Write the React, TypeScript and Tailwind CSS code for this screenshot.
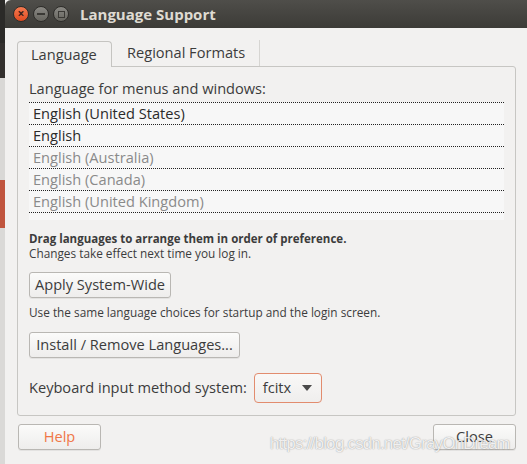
import React from "react";

const font = { fontFamily: '"Open Sans", "Noto Sans", sans-serif' };

function Btn({ children, className = "" }: { children: React.ReactNode; className?: string }) {
  return (
    <div
      className={
        "h-[26px] flex items-center justify-center rounded-[3px] border border-[#b9b7b3] bg-gradient-to-b from-[#fbfbfa] to-[#eeedec] shadow-[0_1px_0_rgba(0,0,0,0.06)] text-[14.6px] " +
        className
      }
    >
      {children}
    </div>
  );
}

export default function App() {
  const langs = [
    { t: "English (United States)", dark: true },
    { t: "English", dark: true },
    { t: "English (Australia)", dark: false },
    { t: "English (Canada)", dark: false },
    { t: "English (United Kingdom)", dark: false },
  ];
  return (
    <div className="w-[527px] h-[464px] flex overflow-hidden bg-[#f2f1f0]" style={font}>
      {/* desktop strip */}
      <div className="w-[5px] flex flex-col">
        <div className="h-[43px] bg-[#2b2a28]" />
        <div className="h-[35px] bg-[#33302e]" />
        <div className="h-[102px] bg-[#d9d8d6]" />
        <div className="h-[48px] bg-[#c0553e]" />
        <div className="flex-1 bg-[#dad9d7]" />
      </div>
      {/* window */}
      <div className="flex-1 flex flex-col bg-[#f2f1f0] text-[#3c3c3c]">
        <div className="h-[28px] flex items-center bg-gradient-to-b from-[#4f4e4a] to-[#3c3b37] rounded-tl-[6px]">
          <div className="ml-[8px] w-[16px] h-[16px] rounded-full bg-gradient-to-b from-[#f47a50] to-[#df4a1f] border border-[#2e2d2a] flex items-center justify-center text-[#3b2019] text-[12px] leading-none font-bold">
            ×
          </div>
          <div className="ml-[4px] w-[16px] h-[16px] rounded-full bg-gradient-to-b from-[#8a8984] to-[#66655f] border border-[#2e2d2a] flex items-center justify-center">
            <div className="w-[8px] h-[2px] bg-[#3a3935]" />
          </div>
          <div className="ml-[4px] w-[16px] h-[16px] rounded-full bg-gradient-to-b from-[#8a8984] to-[#66655f] border border-[#2e2d2a] flex items-center justify-center">
            <div className="w-[7px] h-[7px] border-[1.5px] border-[#3a3935]" />
          </div>
          <div className="ml-[11px] text-[#dfdbd2] font-bold text-[15px]">Language Support</div>
        </div>
        <div className="flex-1 flex flex-col pl-[12px] pr-[11px] pt-[12px]">
          {/* tabs */}
          <div className="flex items-end h-[26px]">
            <div className="w-[95px] h-[26px] border border-b-0 border-[#c5c4c1] rounded-t-[4px] bg-[#f2f1f0] pl-[13px] flex items-center text-[14.6px] relative top-[1px] z-10">
              Language
            </div>
            <div className="h-[26px] pl-[15px] pr-[14px] flex items-center text-[14.6px] border-r border-[#d6d5d2]">
              Regional Formats
            </div>
          </div>
          <div className="h-[350px] border border-[#c7c6c3] rounded-[3px] rounded-tl-none px-[11px] pt-[11px] flex flex-col">
            <div className="text-[14.6px] leading-[20px]">Language for menus and windows:</div>
            <div className="mt-[4px] h-[118px] bg-[#f7f7f7] flex flex-col">
              {langs.map((l) => (
                <div
                  key={l.t}
                  className={
                    "h-[22px] border-t border-dotted border-[#222] pl-[4px] flex items-center text-[14.6px] " +
                    (l.dark ? "text-[#2a2a2a]" : "text-[#8a8a8a]")
                  }
                >
                  {l.t}
                </div>
              ))}
              <div className="border-t border-dotted border-[#222]" />
            </div>
            <div className="mt-[12px] text-[11.5px] leading-[14px] font-bold">
              Drag languages to arrange them in order of preference.
            </div>
            <div className="text-[11.8px] leading-[14px]">Changes take effect next time you log in.</div>
            <Btn className="mt-[12px] w-[142px]">Apply System-Wide</Btn>
            <div className="mt-[7px] text-[11.8px] leading-[14px]">
              Use the same language choices for startup and the login screen.
            </div>
            <Btn className="mt-[13px] w-[211px]">Install / Remove Languages...</Btn>
            <div className="mt-[15px] flex items-center">
              <div className="text-[14.6px]">Keyboard input method system:</div>
              <div className="ml-[7px] w-[68px] h-[30px] rounded-[4px] border border-[#e28c6e] bg-gradient-to-b from-[#f9f8f7] to-[#efeeed] flex items-center pl-[8px] text-[14.6px]">
                fcitx
                <svg width="10" height="6" className="ml-[11px]" viewBox="0 0 10 6">
                  <path d="M0 0 L10 0 L5 6 Z" fill="#4a4a4a" />
                </svg>
              </div>
            </div>
          </div>
          <div className="mt-[8px] flex justify-between relative">
            <Btn className="w-[83px] text-[#f07746] ml-[1px]">Help</Btn>
            <Btn className="w-[83px]">Close</Btn>
            <div
              className="absolute left-[253px] top-[9px] text-[16.5px] leading-[20px] tracking-[-0.6px] text-white/85 pointer-events-none whitespace-nowrap"
              style={{
                fontFamily: '"Liberation Sans", Arial, sans-serif',
                textShadow: "0 0 1px rgba(0,0,0,0.35), 0 0 2px rgba(0,0,0,0.15)",
              }}
            >
              https://blog.csdn.net/GrayOnDream
            </div>
          </div>
        </div>
      </div>
    </div>
  );
}
